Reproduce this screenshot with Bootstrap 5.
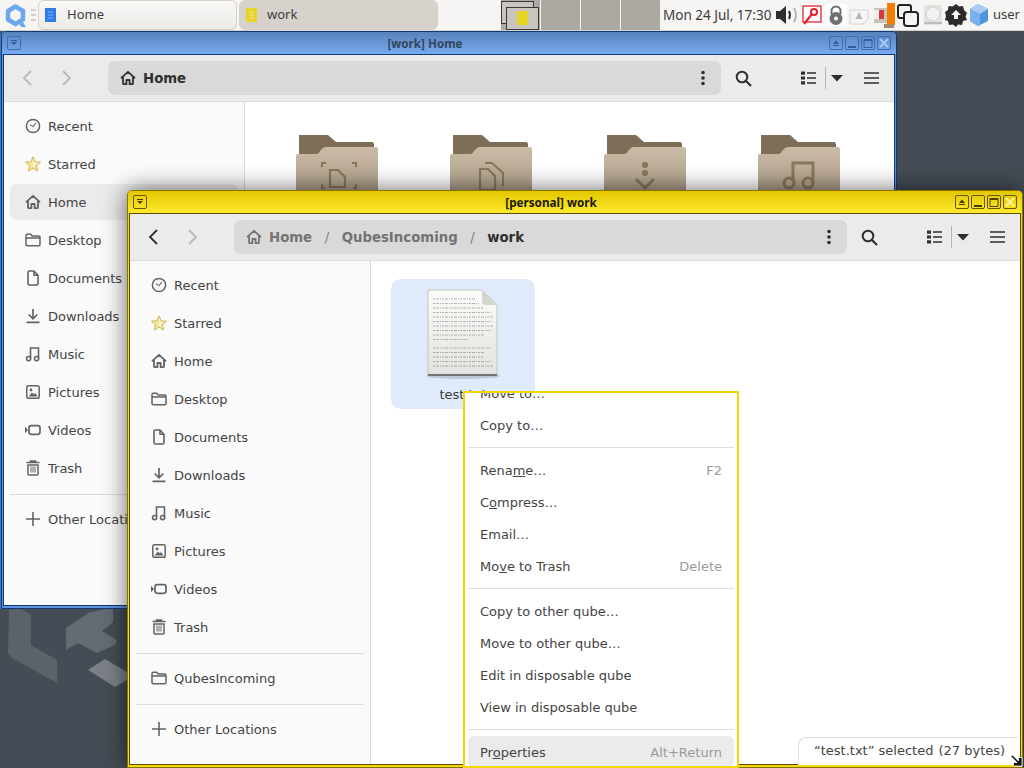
<!DOCTYPE html>
<html lang="en">

<head>
  <meta charset="UTF-8" />
  <title>Qubes desktop</title>
  <link href="https://cdn.jsdelivr.net/npm/bootstrap@5.3.0/dist/css/bootstrap.min.css" rel="stylesheet">
  <style>
    html, body { width: 1024px; height: 768px; overflow: hidden; }
    body { font-family: "DejaVu Sans", sans-serif; font-size: 13px; color: #3d3d3d; background: #454c55; position: relative; }
    svg { display: block; flex: none; }
    .defs-holder { position: absolute; }

    /* top panel */
    .panel-bar { height: 31px; background: #f6f5f3; border-bottom: 1px solid #d5d3cf; font-family: "Noto Sans", sans-serif; }
    .panel-logo { margin: 4px 4px 0 5px; }
    .panel-handle { margin: 8px 2px 0 1px; }
    .task-btn { width: 199px; height: 30px; flex: none; border: 1px solid #d3cfc9; border-radius: 6px; background: linear-gradient(#f9f8f7, #ecebe7); padding-left: 6px; gap: 11px; }
    .task-btn.is-active { background: #d6d1cb; border-color: #d6d1cb; margin-left: 2px; gap: 10px; }
    .pager { margin-left: 63px; flex: none; }
    .pager-cell { width: 39px; height: 30px; background: #aca9a3; margin-right: 1px; position: relative; }
    .pager-cell:last-child { margin-right: 0; }
    .pager-thumb { position: absolute; border: 1px solid #3a3a3a; background: #c9c5be; width: 33px; height: 23px; }
    .pager-back { left: 0; top: 1px; }
    .pager-front { left: 5px; top: 7px; }
    .pager-icon { position: absolute; left: 16px; top: 11px; }
    .clock-text { font-size: 13.5px; white-space: nowrap; margin-left: 3px; width: 112px; flex: none; }
    .tray { gap: 2px; flex: none; }
    .tray-gap { margin-left: 2px; }
    .tray-text { margin-left: 2px; font-size: 13px; }

    /* window frames */
    .wm-window { position: absolute; width: 896px; height: 578px; border-radius: 5px 5px 0 0; padding: 0 1px 2px; border: 1px solid #222; }
    .wm-blue { left: 1px; top: 31px; background: #5d92dc; border-color: #123a75; box-shadow: -1px 0 0 #3f78cc; }
    .wm-yellow { left: 127px; top: 190px; background: #f1da10; border-color: #8a7400; box-shadow: 0 0 24px rgba(0, 0, 0, .6); }
    .wm-title { height: 22px; position: relative; margin: 0 -1px; padding: 0 5px; border-radius: 4px 4px 0 0; }
    .wm-blue .wm-title { background: linear-gradient(#5783bb, #78aaf0); color: #35465c; }
    .wm-yellow .wm-title { background: linear-gradient(#e2c700, #ffea2e); color: #1c1a00; }
    .wm-title-text { position: absolute; left: 22px; right: 70px; text-align: center; font-family: "Noto Sans", sans-serif; font-size: 11.7px; font-weight: 700; line-height: 20px; }
    .wm-btn { width: 14px; height: 14px; border: 1px solid; border-radius: 2px; }
    .wm-blue .wm-btn { border-color: #3d6eb3; color: #2f5c9e; }
    .wm-yellow .wm-btn { border-color: #6a5600; color: #4c3e00; }
    .wm-btn-group { margin-left: auto; gap: 2px; }
    .wm-client { height: 552px; border: 1px solid; background: #fff; overflow: hidden; }
    .wm-blue .wm-client { border-color: #123a75; }
    .wm-yellow .wm-client { border-color: #5f4c00; }

    /* file manager */
    .fm-header { height: 47px; background: #ebebeb; border-bottom: 1px solid #dcdcdc; color: #2e2e2e; }
    .tool-off { color: #b9b9b9; }
    .tool-back { margin-left: 17px; }
    .tool-fwd { margin-left: 28px; }
    .tool-search { margin-left: 14px; }
    .tool-list { margin-left: 49px; }
    .tool-div { margin-left: 9px; width: 1px; height: 22px; background: #b5b5b5; }
    .tool-caret { margin-left: 5px; }
    .tool-burger { margin-left: 21px; }
    .fm-pathbar { margin-left: 35px; width: 613px; height: 34px; flex: none; background: #d9d9d9; border-radius: 7px; padding: 2px 0 0 12px; font-size: 13.3px; font-weight: 700; color: #2e2e2e; }
    .fm-pathbar svg { margin-top: -2px; }
    .path-label { margin-left: 7px; }
    .path-dots { margin-left: auto; margin-right: 16px; }
    .crumb-muted { color: #737373; }
    .crumb-slash { color: #808080; font-weight: 400; margin: 0 12.5px; }
    .fm-body { height: 503px; }
    .fm-side { width: 241px; flex: none; background: #fafafa; border-right: 1px solid #d9d9d9; padding: 6px 6px 0; }
    .side-row { height: 36px; margin-bottom: 2px; padding: 2px 0 0 15px; gap: 7px; border-radius: 7px; white-space: nowrap; color: #444; }
    .side-row.is-current { background: #ebebeb; }
    .side-row svg { color: #636363; margin-top: -2px; }
    .side-sep { height: 1px; background: #dcdcdc; margin: 8px 0 6px; }
    .fm-main { flex: 1; min-width: 0; overflow: hidden; }
    .folder-grid { padding: 32px 0 0 51px; gap: 72px; }
    .file-item { margin: 18px 0 0 20px; width: 144px; height: 130px; background: #dfeafa; border-radius: 10px; text-align: center; padding-top: 10px; line-height: 16px; }
    .file-doc { margin: 0 auto 6px; }

    /* context menu */
    .ctx-menu { position: absolute; left: 463px; top: 391px; width: 276px; height: 377px; background: #fff; border: 2px solid #f0d800; padding: 0 3px; overflow: hidden; }
    .ctx-scroll { margin-top: -16px; }
    .ctx-item { height: 32px; padding: 2px 12px 0; border-radius: 6px; white-space: nowrap; color: #444; }
    .ctx-key { margin-left: auto; color: #9a9a9a; }
    .ctx-sep { height: 1px; background: #dfdfdf; margin: 6px 0; }
    .ctx-item.is-hover { background: #ebebeb; }

    .status-float { position: absolute; left: 798px; top: 737px; width: 220px; height: 28px; background: #fff; border: 1px solid #dcdcdc; border-right: 0; border-bottom: 0; border-radius: 8px 0 0 0; padding-left: 15px; line-height: 26px; white-space: nowrap; color: #444; }
    .status-size { margin-left: 5px; }
    .resize-cursor { position: absolute; left: 1010px; top: 754px; }
    .desk-logo { position: absolute; left: 0; top: 600px; }
  </style>
</head>

<body>
  <svg width="0" height="0" class="defs-holder">
    <defs>
      <symbol id="i-home" viewBox="0 0 16 16"><path d="M1 8.200 8 1.800l7 6.400M3 7v6.200c0 .6.400 1 1 1h2.400V10h3.200v4.200H12c.6 0 1-.4 1-1V7" fill="none" stroke="currentColor" stroke-width="1.800" stroke-linejoin="round" /></symbol>
      <symbol id="i-recent" viewBox="0 0 16 16"><circle cx="8" cy="8" r="6.600" fill="none" stroke="currentColor" stroke-width="1.500" /><path d="M4.800 6.600 8 8.600l3-3.400" fill="none" stroke="currentColor" stroke-width="1.100" /></symbol>
      <symbol id="i-star" viewBox="0 0 16 16"><path d="m8 .8 2.100 5 5.400.4-4.100 3.500 1.300 5.300L8 12.100 3.300 15l1.300-5.300L.5 6.200l5.400-.4z" fill="#f3e7a6" stroke="#d2b84e" stroke-width="1" /><path d="m8 3.500 1.300 3.200 3.300.2L8 11z" fill="#fbf5cf" /></symbol>
      <symbol id="i-folder" viewBox="0 0 16 16"><path d="M1 3.600c0-.8.500-1.300 1.200-1.300h3.400l1.600 1.800h6.600c.8 0 1.200.5 1.200 1.200v7.200c0 .8-.5 1.200-1.200 1.200H2.200C1.500 13.700 1 13.300 1 12.500zM1 6h14" fill="none" stroke="currentColor" stroke-width="1.500" /></symbol>
      <symbol id="i-doc" viewBox="0 0 16 16"><path d="M3 2.500C3 1.700 3.500 1 4.300 1H9l4 4.200v8.300c0 .8-.5 1.500-1.300 1.500H4.300C3.500 15 3 14.300 3 13.500zM9 1v4.200h4" fill="none" stroke="currentColor" stroke-width="1.600" stroke-linejoin="round" /></symbol>
      <symbol id="i-down" viewBox="0 0 16 16"><path d="M8 1v9.500M3.700 6.500 8 10.800l4.300-4.300M1.500 14.300h13" fill="none" stroke="currentColor" stroke-width="1.700" /></symbol>
      <symbol id="i-music" viewBox="0 0 16 16"><circle cx="3.600" cy="12.600" r="2.100" fill="none" stroke="currentColor" stroke-width="1.500" /><circle cx="11.600" cy="12.600" r="2.100" fill="none" stroke="currentColor" stroke-width="1.500" /><path d="M5.500 12V2h8v10.500" fill="none" stroke="currentColor" stroke-width="1.600" /></symbol>
      <symbol id="i-pic" viewBox="0 0 16 16"><rect x="1.800" y="1.800" width="12.400" height="12.400" rx="1.800" fill="none" stroke="currentColor" stroke-width="1.500" /><circle cx="6" cy="6" r="1.400" fill="currentColor" /><path d="M3.500 12.500 7 8.500l1.800 1.800 1.400-1.200 2.300 3.400z" fill="currentColor" /></symbol>
      <symbol id="i-video" viewBox="0 0 16 16"><path d="M0 4.800 3 8l-3 3.200z" fill="currentColor" /><rect x="4" y="3.700" width="11" height="8.600" rx="2.200" fill="none" stroke="currentColor" stroke-width="1.700" /></symbol>
      <symbol id="i-trash" viewBox="0 0 16 16"><path d="M1.500 2.600h13M5.500 2.500V1h5v1.500M3 5h10v9c0 .6-.4 1-1 1H4c-.6 0-1-.4-1-1z" fill="none" stroke="currentColor" stroke-width="1.500" /><path d="M6 6.500v6M8 6.500v6M10 6.500v6" stroke="currentColor" stroke-width="1" /></symbol>
      <symbol id="i-plus" viewBox="0 0 16 16"><path d="M8 1v14M1 8h14" stroke="currentColor" stroke-width="1.600" /></symbol>
      <symbol id="i-search" viewBox="0 0 17 17"><circle cx="7" cy="7" r="5.300" fill="none" stroke="currentColor" stroke-width="2" /><path d="m11 11 5 5" stroke="currentColor" stroke-width="2.200" /></symbol>
      <symbol id="i-list" viewBox="0 0 15 16"><path d="M0 1.500h4v3.200H0zM0 6.400h4v3.200H0zM0 11.300h4v3.200H0z" fill="currentColor" /><path d="M6 3h9M6 8h9M6 13h9" stroke="currentColor" stroke-width="1.700" /></symbol>
      <symbol id="i-burger" viewBox="0 0 15 16"><path d="M0 3h15M0 8h15M0 13h15" stroke="currentColor" stroke-width="1.700" /></symbol>
      <symbol id="i-dots" viewBox="0 0 4 16"><circle cx="2" cy="2.500" r="1.800" fill="currentColor" /><circle cx="2" cy="8" r="1.800" fill="currentColor" /><circle cx="2" cy="13.500" r="1.800" fill="currentColor" /></symbol>
      <symbol id="i-back" viewBox="0 0 12 16"><path d="M10 1 3 8l7 7" fill="none" stroke="currentColor" stroke-width="1.800" /></symbol>
      <symbol id="i-fwd" viewBox="0 0 12 16"><path d="m2 1 7 7-7 7" fill="none" stroke="currentColor" stroke-width="1.800" /></symbol>
      <symbol id="i-caret" viewBox="0 0 12 7"><path d="M0 0h12L6 6.500z" fill="currentColor" /></symbol>
      <symbol id="w-shade" viewBox="0 0 8 8"><path d="M1 1h6v1H1zM1 3h6L4 6z" fill="currentColor" /></symbol>
      <symbol id="w-up" viewBox="0 0 8 8"><path d="M1 5h6L4 1.500zM1 6h6v1H1z" fill="currentColor" /></symbol>
      <symbol id="w-min" viewBox="0 0 8 4"><path d="M0 1h8v2H0z" fill="currentColor" /></symbol>
      <symbol id="w-max" viewBox="0 0 10 10"><path d="M1 1.500h8v8H1z" fill="none" stroke="currentColor" /><path d="M1 1h8v2H1z" fill="currentColor" /></symbol>
      <linearGradient id="folder-front" x1="0" y1="0" x2="0" y2="1"><stop offset="0" stop-color="#c9bba6" /><stop offset="1" stop-color="#a89a84" /></linearGradient>
      <symbol id="i-bigfolder" viewBox="0 0 82 64"><path d="M3 1h29l8 7h36c1 0 2 1 2 2v20H3z" fill="#7f6e57" /><path d="M0 22c0-2 1-2 3-2h17c2 0 3-1 4-3l2-2c1-1 2-2 4-2h50c1 0 2 1 2 2v50H0z" fill="url(#folder-front)" /></symbol>
    </defs>
  </svg>

  <svg class="desk-logo" width="130" height="90" viewBox="0 600 130 90">
    <path d="M9 610 20 608l11 7v30l26 15v23L12 658l-4-5z" fill="#5b626a" />
    <path d="M66 628 90 612l23-4v14l-11 9 15 9-2 5-18 8-19-10-12 7z" fill="#646b73" />
    <path d="M88 670 105 659l22 13v8l-12 7z" fill="#7b8188" />
  </svg>

  <div class="panel-bar d-flex align-items-start">
    <svg class="panel-logo" width="21" height="24" viewBox="0 0 21 24">
      <path d="M10.500 2.500 18 7v8.500L10.500 20 3 15.500V7z" fill="none" stroke="#6ea8ec" stroke-width="4.500" stroke-linejoin="round" />
      <path d="m12 16 4-1 5 8h-5z" fill="#6ea8ec" />
    </svg>
    <svg class="panel-handle" width="5" height="14" viewBox="0 0 5 14"><path d="M0 2h5M0 7h5M0 12h5" stroke="#aaa" stroke-width="1" /></svg>
    <div class="task-btn d-flex align-items-center">
      <svg width="11" height="14" viewBox="0 0 11 14"><rect width="11" height="14" fill="#2e7de6" /><path d="M3 4h5M3 7h5M3 10h5" stroke="#7db0f2" /></svg>
      <span>Home</span>
    </div>
    <div class="task-btn is-active d-flex align-items-center">
      <svg width="11" height="14" viewBox="0 0 11 14"><rect width="11" height="14" fill="#e8d327" /><path d="M3 4h5M3 7h5M3 10h5" stroke="#f2e77f" /></svg>
      <span>work</span>
    </div>
    <div class="pager d-flex">
      <div class="pager-cell">
        <div class="pager-thumb pager-back"></div>
        <div class="pager-thumb pager-front"></div>
        <svg class="pager-icon" width="11" height="14" viewBox="0 0 11 14"><rect width="11" height="14" fill="#e8d327" /></svg>
      </div>
      <div class="pager-cell"></div>
      <div class="pager-cell"></div>
      <div class="pager-cell"></div>
    </div>
    <div class="clock-text align-self-center">Mon 24 Jul, 17:30</div>
    <div class="tray d-flex align-items-center align-self-center">
      <svg width="24" height="22" viewBox="0 0 24 22"><path d="M1 7h4l6-5v18l-6-5H1z" fill="#2f2f2f" /><path d="M14 7q2 4 0 8" fill="none" stroke="#2f2f2f" stroke-width="2" /><path d="M19 4q4 7 0 14" fill="none" stroke="#b5b5b5" stroke-width="2" /></svg>
      <svg width="22" height="22" viewBox="0 0 22 22"><rect width="22" height="22" fill="#fff" /><rect x="2" y="2" width="18" height="16" fill="none" stroke="#e2222a" stroke-width="1.300" /><circle cx="13" cy="8" r="3" fill="none" stroke="#e2222a" stroke-width="2" /><path d="m11 10-8 10" stroke="#e2222a" stroke-width="2.200" /></svg>
      <svg width="22" height="22" viewBox="0 0 22 22"><rect width="22" height="22" fill="#fff" /><path d="M6.500 10V7a4.500 4.500 0 0 1 9 0v3" fill="none" stroke="#6f6f6f" stroke-width="2" /><circle cx="11" cy="14.500" r="6.500" fill="#6f6f6f" /><circle cx="11" cy="14.500" r="2" fill="#fff" /></svg>
      <svg width="20" height="20" viewBox="0 0 20 20"><path d="M1 5h18v9l-5 5H1z" fill="#f6f5f3" stroke="#d2d2d2" /><path d="m10 7 3.500 7h-7z" fill="#b5b5b5" /></svg>
      <svg class="tray-gap" width="22" height="26" viewBox="0 0 22 26"><rect x="1" y="6" width="14" height="15" fill="#c7c2bb" /><rect x="5" y="8" width="6" height="9" fill="#d83a3a" /><rect x="1" y="8" width="5" height="9" fill="#efefef" /><path d="M14 1h8v22h-8z" fill="#f47c00" /><path d="M11 22h10v4H11z" fill="#a58c70" /></svg>
      <svg width="22" height="24" viewBox="0 0 22 24"><rect x="1" y="2" width="13" height="13" rx="2" fill="none" stroke="#222" stroke-width="2" /><rect x="7" y="9" width="14" height="14" rx="3" fill="#f6f5f3" stroke="#222" stroke-width="2" /></svg>
      <svg class="tray-gap" width="20" height="22" viewBox="0 0 20 22"><rect x="1" y="1" width="18" height="20" fill="#e4e3e0" /><circle cx="10" cy="10" r="7" fill="#f2f2f0" stroke="#d0d0ce" /><path d="M1 19h18" stroke="#bbb" stroke-width="2" /></svg>
      <svg width="22" height="24" viewBox="0 0 22 24"><path d="M11 1l3 2.500 4-.5 1 4 3 3-1.500 3.500L22 17l-4 1-1 4-4-.5-2 2.500-3-2.500-4 .5-1-4-3-1 1-4L0 9l3-2 .5-4 4 .5z" fill="#2b2b2b" /><path d="M11 7l5 5h-3v4H9v-4H6z" fill="#f6f5f3" /></svg>
      <svg width="20" height="24" viewBox="0 0 20 24"><path d="M9 1l10 5v12L9 23 1 18V6z" fill="#4d93de" /><path d="M1 6l10 5v12l-2 0-8-5z" fill="#79b0ea" /><path d="M9 1l10 5-8 5L1 6z" fill="#a7cbf2" /></svg>
      <span class="tray-text">user</span>
    </div>
  </div>

  <!-- [work] Home -->
  <div class="wm-window wm-blue">
    <div class="wm-title d-flex align-items-center">
      <div class="wm-title-text">[work] Home</div>
      <div class="wm-btn d-flex align-items-center justify-content-center"><svg width="8" height="8"><use href="#w-shade" /></svg></div>
      <div class="wm-btn-group d-flex">
        <div class="wm-btn d-flex align-items-center justify-content-center"><svg width="8" height="8"><use href="#w-up" /></svg></div>
        <div class="wm-btn d-flex align-items-end justify-content-center"><svg width="8" height="4"><use href="#w-min" /></svg></div>
        <div class="wm-btn d-flex align-items-center justify-content-center"><svg width="10" height="10"><use href="#w-max" /></svg></div>
        <div class="wm-btn d-flex align-items-center justify-content-center"><svg width="10" height="10" viewBox="0 0 10 10"><path d="m1 1 8 8M9 1l-8 8" stroke="#a9c8f2" stroke-width="2" /></svg></div>
      </div>
    </div>
    <div class="wm-client">
      <div class="fm-header d-flex align-items-center">
        <svg class="tool-back tool-off" width="12" height="16"><use href="#i-back" /></svg>
        <svg class="tool-fwd tool-off" width="12" height="16"><use href="#i-fwd" /></svg>
        <div class="fm-pathbar d-flex align-items-center">
          <svg width="16" height="16"><use href="#i-home" /></svg>
          <span class="path-label">Home</span>
          <svg class="path-dots" width="4" height="16"><use href="#i-dots" /></svg>
        </div>
        <svg class="tool-search" width="17" height="17"><use href="#i-search" /></svg>
        <svg class="tool-list" width="15" height="16"><use href="#i-list" /></svg>
        <div class="tool-div"></div>
        <svg class="tool-caret" width="12" height="7"><use href="#i-caret" /></svg>
        <svg class="tool-burger" width="15" height="16"><use href="#i-burger" /></svg>
      </div>
      <div class="fm-body d-flex">
        <div class="fm-side">
          <div class="side-row d-flex align-items-center"><svg width="16" height="16"><use href="#i-recent" /></svg>Recent</div>
          <div class="side-row d-flex align-items-center"><svg width="16" height="16"><use href="#i-star" /></svg>Starred</div>
          <div class="side-row is-current d-flex align-items-center"><svg width="16" height="16"><use href="#i-home" /></svg>Home</div>
          <div class="side-row d-flex align-items-center"><svg width="16" height="16"><use href="#i-folder" /></svg>Desktop</div>
          <div class="side-row d-flex align-items-center"><svg width="16" height="16"><use href="#i-doc" /></svg>Documents</div>
          <div class="side-row d-flex align-items-center"><svg width="16" height="16"><use href="#i-down" /></svg>Downloads</div>
          <div class="side-row d-flex align-items-center"><svg width="16" height="16"><use href="#i-music" /></svg>Music</div>
          <div class="side-row d-flex align-items-center"><svg width="16" height="16"><use href="#i-pic" /></svg>Pictures</div>
          <div class="side-row d-flex align-items-center"><svg width="16" height="16"><use href="#i-video" /></svg>Videos</div>
          <div class="side-row d-flex align-items-center"><svg width="16" height="16"><use href="#i-trash" /></svg>Trash</div>
          <div class="side-sep"></div>
          <div class="side-row d-flex align-items-center"><svg width="16" height="16"><use href="#i-plus" /></svg>Other Locations</div>
        </div>
        <div class="fm-main">
          <div class="folder-grid d-flex">
            <svg width="82" height="64"><use href="#i-bigfolder" /><path d="M26 33v-4h4M56 29h4v4M26 50v4h3M60 50v4h-3" fill="none" stroke="#8a7658" stroke-width="2" /><path d="M34 36h8l7 7v10H34z" fill="none" stroke="#8a7658" stroke-width="2.200" /></svg>
            <svg width="82" height="64"><use href="#i-bigfolder" /><path d="M30 35h8l7 7v14H30z" fill="none" stroke="#8a7658" stroke-width="2.200" /><path d="M35 29h7l11 10v13" fill="none" stroke="#8a7658" stroke-width="2" /></svg>
            <svg width="82" height="64"><use href="#i-bigfolder" /><circle cx="41" cy="31" r="3" fill="#8a7658" /><circle cx="41" cy="39" r="3" fill="#8a7658" /><path d="m32 45 9 9 9-9" fill="none" stroke="#8a7658" stroke-width="3" /></svg>
            <svg width="82" height="64"><use href="#i-bigfolder" /><path d="M35 47V29h20v20" fill="none" stroke="#8a7658" stroke-width="3" /><circle cx="31" cy="49" r="5" fill="none" stroke="#8a7658" stroke-width="3" /><circle cx="50" cy="49" r="5" fill="none" stroke="#8a7658" stroke-width="3" /></svg>
          </div>
        </div>
      </div>
    </div>
  </div>

  <!-- [personal] work -->
  <div class="wm-window wm-yellow">
    <div class="wm-title d-flex align-items-center">
      <div class="wm-title-text">[personal] work</div>
      <div class="wm-btn d-flex align-items-center justify-content-center"><svg width="8" height="8"><use href="#w-shade" /></svg></div>
      <div class="wm-btn-group d-flex">
        <div class="wm-btn d-flex align-items-center justify-content-center"><svg width="8" height="8"><use href="#w-up" /></svg></div>
        <div class="wm-btn d-flex align-items-end justify-content-center"><svg width="8" height="4"><use href="#w-min" /></svg></div>
        <div class="wm-btn d-flex align-items-center justify-content-center"><svg width="10" height="10"><use href="#w-max" /></svg></div>
        <div class="wm-btn d-flex align-items-center justify-content-center"><svg width="10" height="10" viewBox="0 0 10 10"><path d="m1 1 8 8M9 1l-8 8" stroke="#fff49a" stroke-width="2" /></svg></div>
      </div>
    </div>
    <div class="wm-client">
      <div class="fm-header d-flex align-items-center">
        <svg class="tool-back" width="12" height="16"><use href="#i-back" /></svg>
        <svg class="tool-fwd tool-off" width="12" height="16"><use href="#i-fwd" /></svg>
        <div class="fm-pathbar d-flex align-items-center">
          <svg class="crumb-muted" width="16" height="16"><use href="#i-home" /></svg>
          <span class="path-label crumb-muted">Home</span>
          <span class="crumb-slash">/</span>
          <span class="crumb-muted">QubesIncoming</span>
          <span class="crumb-slash">/</span>
          <span>work</span>
          <svg class="path-dots" width="4" height="16"><use href="#i-dots" /></svg>
        </div>
        <svg class="tool-search" width="17" height="17"><use href="#i-search" /></svg>
        <svg class="tool-list" width="15" height="16"><use href="#i-list" /></svg>
        <div class="tool-div"></div>
        <svg class="tool-caret" width="12" height="7"><use href="#i-caret" /></svg>
        <svg class="tool-burger" width="15" height="16"><use href="#i-burger" /></svg>
      </div>
      <div class="fm-body d-flex">
        <div class="fm-side">
          <div class="side-row d-flex align-items-center"><svg width="16" height="16"><use href="#i-recent" /></svg>Recent</div>
          <div class="side-row d-flex align-items-center"><svg width="16" height="16"><use href="#i-star" /></svg>Starred</div>
          <div class="side-row d-flex align-items-center"><svg width="16" height="16"><use href="#i-home" /></svg>Home</div>
          <div class="side-row d-flex align-items-center"><svg width="16" height="16"><use href="#i-folder" /></svg>Desktop</div>
          <div class="side-row d-flex align-items-center"><svg width="16" height="16"><use href="#i-doc" /></svg>Documents</div>
          <div class="side-row d-flex align-items-center"><svg width="16" height="16"><use href="#i-down" /></svg>Downloads</div>
          <div class="side-row d-flex align-items-center"><svg width="16" height="16"><use href="#i-music" /></svg>Music</div>
          <div class="side-row d-flex align-items-center"><svg width="16" height="16"><use href="#i-pic" /></svg>Pictures</div>
          <div class="side-row d-flex align-items-center"><svg width="16" height="16"><use href="#i-video" /></svg>Videos</div>
          <div class="side-row d-flex align-items-center"><svg width="16" height="16"><use href="#i-trash" /></svg>Trash</div>
          <div class="side-sep"></div>
          <div class="side-row d-flex align-items-center"><svg width="16" height="16"><use href="#i-folder" /></svg>QubesIncoming</div>
          <div class="side-sep"></div>
          <div class="side-row d-flex align-items-center"><svg width="16" height="16"><use href="#i-plus" /></svg>Other Locations</div>
        </div>
        <div class="fm-main">
          <div class="file-item">
            <svg class="file-doc" width="74" height="92" viewBox="0 0 74 92">
              <defs><linearGradient id="doc-fill" x1="0" y1="0" x2="0" y2="1"><stop offset="0" stop-color="#fbfbf9" /><stop offset="1" stop-color="#e2e3df" /></linearGradient></defs>
              <ellipse cx="37" cy="87" rx="37" ry="3" fill="#a9b3c0" opacity=".6" />
              <path d="M2 1h54l15 15v70H2z" fill="url(#doc-fill)" stroke="#c4c4c0" />
              <path d="M56 1l15 15H60c-3 0-4-2-4-4z" fill="#d5d5d2" />
              <path d="M2 86h69" stroke="#55575a" stroke-width="1.400" />
              <g stroke="#555" stroke-width=".7" stroke-dasharray="2 1 3 1 1 1" opacity=".6">
                <path d="M7 10h42M7 14.500h46M7 19h50M7 23.500h58M7 28h60M7 32.500h58M7 37h60M7 41.500h58M7 46h52M7 50.500h36" />
                <path d="M7 59h58M7 63.500h52M7 68h50M7 72.500h58M7 77h60" />
              </g>
            </svg>
            test.txt
          </div>
        </div>
      </div>
    </div>
  </div>

  <div class="ctx-menu">
    <div class="ctx-scroll">
      <div class="ctx-item d-flex align-items-center">Move to…</div>
      <div class="ctx-item d-flex align-items-center">Copy to…</div>
      <div class="ctx-sep"></div>
      <div class="ctx-item d-flex align-items-center"><span>Rena<u>m</u>e…</span><span class="ctx-key">F2</span></div>
      <div class="ctx-item d-flex align-items-center"><span>C<u>o</u>mpress…</span></div>
      <div class="ctx-item d-flex align-items-center">Email…</div>
      <div class="ctx-item d-flex align-items-center"><span>Mo<u>v</u>e to Trash</span><span class="ctx-key">Delete</span></div>
      <div class="ctx-sep"></div>
      <div class="ctx-item d-flex align-items-center">Copy to other qube…</div>
      <div class="ctx-item d-flex align-items-center">Move to other qube…</div>
      <div class="ctx-item d-flex align-items-center">Edit in disposable qube</div>
      <div class="ctx-item d-flex align-items-center">View in disposable qube</div>
      <div class="ctx-sep"></div>
      <div class="ctx-item is-hover d-flex align-items-center"><span>Pr<u>o</u>perties</span><span class="ctx-key">Alt+Return</span></div>
    </div>
  </div>

  <div class="status-float">“test.txt” selected<span class="status-size">(27 bytes)</span></div>
  <svg class="resize-cursor" width="13" height="13" viewBox="0 0 13 13"><path d="M1 2.500 2.500 1l6 6V3.500H12V12H3.500V8.500H7z" fill="#111" stroke="#fff" stroke-width=".8" /></svg>

  <script src="https://cdn.jsdelivr.net/npm/bootstrap@5.3.0/dist/js/bootstrap.bundle.min.js"></script>
</body>

</html>
